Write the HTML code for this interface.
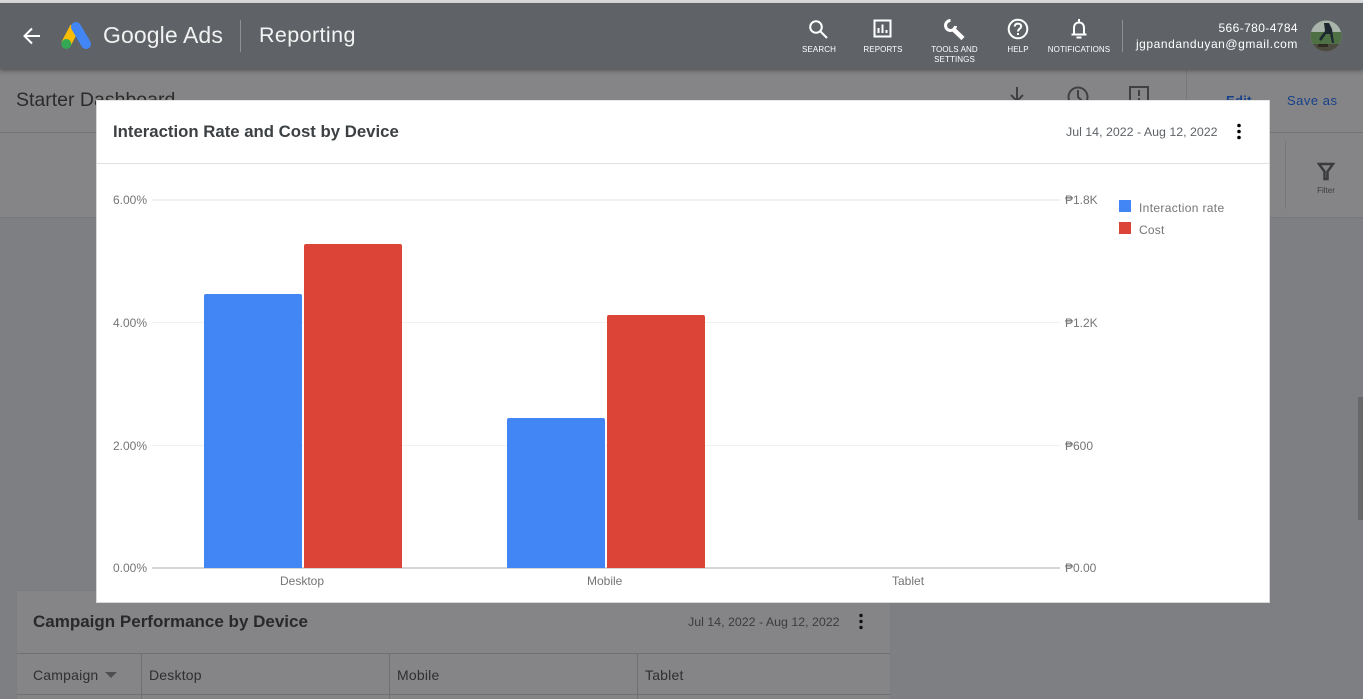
<!DOCTYPE html>
<html><head><meta charset="utf-8">
<style>
*{box-sizing:border-box}
html,body{margin:0;padding:0;width:1363px;height:699px;overflow:hidden;background:#7e7f82;font-family:"Liberation Sans",sans-serif}
.a{position:absolute;white-space:nowrap}
.nav{color:#fff;font-size:8px;letter-spacing:.1px;text-align:center;line-height:10px}
.ax{color:#757575;font-size:12px;line-height:14px}
.bar{position:absolute}
.line{position:absolute;left:152px;width:908px;height:1px;background:#f0f0f0}
</style></head><body>
<div class="a" style="left:0;top:0;width:1363px;height:3px;background:#dadada"></div>
<div class="a" style="left:0;top:70px;width:1363px;height:148px;background:#858587"></div>
<div class="a" style="left:0;top:132px;width:1363px;height:1px;background:#737476"></div>
<div class="a" style="left:0;top:217px;width:1363px;height:1px;background:#77787a"></div>
<div class="a" style="left:1186px;top:70px;width:1px;height:62px;background:#77787a"></div>
<div class="a" style="left:1285px;top:141px;width:1px;height:68px;background:#77787a"></div>
<div class="a" style="left:16px;top:88px;font-size:19.500px;line-height:24px;color:#2b2b2c">Starter Dashboard</div>
<svg class="a" style="left:1000px;top:80px" width="150" height="24" fill="none" stroke="#3f4042" stroke-width="2">
<path d="M17 7V20M11 15l6 6 6-6M9 25h16"/><circle cx="78" cy="17" r="9.500"/><path d="M78 10v7l5 5"/><rect x="130" y="7" width="18" height="18"/><path d="M139 10v6M139 18v2"/></svg>
<div class="a" style="left:1226px;top:93px;font-size:13px;line-height:16px;color:#17408a;font-weight:bold;letter-spacing:.3px">Edit</div>
<div class="a" style="left:1287px;top:93px;font-size:13px;line-height:16px;color:#17408a;letter-spacing:.5px">Save as</div>
<svg class="a" style="left:1316px;top:161px" width="20" height="20" fill="none" stroke="#3a3b3d" stroke-width="2.500"><path d="M3 3H17L11.500 10.500V18H8.500V10.500Z"/></svg>
<div class="a" style="left:1316px;top:186px;font-size:8px;line-height:10px;color:#3d3e40;width:20px;text-align:center">Filter</div>

<div class="a" style="left:16px;top:590px;width:875px;height:109px;background:#858587;border:1px solid #7c7d7f;border-bottom:0"></div>
<div class="a" style="left:17px;top:653px;width:873px;height:1px;background:#6f7072"></div>
<div class="a" style="left:17px;top:694px;width:873px;height:1px;background:#6f7072"></div>
<div class="a" style="left:141px;top:654px;width:1px;height:45px;background:#6f7072"></div>
<div class="a" style="left:389px;top:654px;width:1px;height:45px;background:#6f7072"></div>
<div class="a" style="left:637px;top:654px;width:1px;height:45px;background:#6f7072"></div>
<div class="a" style="left:33px;top:611px;font-size:17px;line-height:22px;font-weight:bold;color:#29292a">Campaign Performance by Device</div>
<div class="a" style="left:688px;top:615px;font-size:12.400px;line-height:15px;color:#3b3c3e">Jul 14, 2022 - Aug 12, 2022</div>
<svg class="a" style="left:856px;top:612px" width="10" height="20" fill="#111"><circle cx="5" cy="3.500" r="1.700"/><circle cx="5" cy="9.500" r="1.700"/><circle cx="5" cy="15.500" r="1.700"/></svg>
<div class="a" style="left:33px;top:667px;font-size:14px;line-height:17px;color:#2f2f31;letter-spacing:.2px">Campaign</div>
<div class="a" style="left:105px;top:672px;width:0;height:0;border-left:6px solid transparent;border-right:6px solid transparent;border-top:6px solid #4e4f51"></div>
<div class="a" style="left:149px;top:667px;font-size:14px;line-height:17px;color:#2f2f31;letter-spacing:.2px">Desktop</div>
<div class="a" style="left:397px;top:667px;font-size:14px;line-height:17px;color:#2f2f31;letter-spacing:.2px">Mobile</div>
<div class="a" style="left:645px;top:667px;font-size:14px;line-height:17px;color:#2f2f31;letter-spacing:.2px">Tablet</div>
<div class="a" style="left:1358px;top:397px;width:5px;height:123px;background:#67686a"></div>

<!-- header -->
<div class="a" style="left:0;top:3px;width:1363px;height:66px;background:#5f6368;box-shadow:0 2px 4px rgba(40,40,40,.45)"></div>
<svg class="a" style="left:22px;top:26px" width="20" height="20" fill="none" stroke="#fff" stroke-width="2"><path d="M18 10H3M10 2.500L2.500 10L10 17.500"/></svg>
<svg class="a" style="left:60px;top:21px" width="32" height="29">
<path d="M6 23L15 6" stroke="#fbbc04" stroke-width="10"/>
<path d="M16 6L26 23" stroke="#4285f4" stroke-width="10" stroke-linecap="round"/>
<circle cx="6.300" cy="23" r="5" fill="#34a853"/></svg>
<div class="a" style="left:103px;top:21px;font-size:23px;line-height:29px;color:#f1f1f1;letter-spacing:.1px">Google Ads</div>
<div class="a" style="left:240px;top:20px;width:1px;height:32px;background:#8d9094"></div>
<div class="a" style="left:259px;top:21px;font-size:21.500px;line-height:28px;color:#f4f4f4;letter-spacing:.4px">Reporting</div>

<svg class="a" style="left:808px;top:19px" width="22" height="20" fill="none" stroke="#fff" stroke-width="2"><circle cx="8" cy="8" r="5.800"/><path d="M12.500 12.500L19 19"/></svg>
<div class="a nav" style="left:799px;top:45px;width:40px">SEARCH</div>
<svg class="a" style="left:873px;top:19px" width="20" height="20" fill="none" stroke="#fff" stroke-width="2"><rect x="1.500" y="1.500" width="16" height="16"/><path d="M5.500 9v5M9.500 5.500V14M13.500 11v3"/></svg>
<div class="a nav" style="left:858px;top:45px;width:50px">REPORTS</div>
<svg class="a" style="left:943px;top:18px" width="24" height="24" fill="none" stroke="#fff"><path d="M9.500 10.500L20 20.500" stroke-width="4.500"/><path d="M7.500 2.500A5 5 0 1 0 12.500 8" stroke-width="3"/></svg>
<div class="a nav" style="left:922px;top:45px;width:65px">TOOLS AND<br>SETTINGS</div>
<svg class="a" style="left:1007px;top:18px" width="22" height="22" fill="none" stroke="#fff" stroke-width="2"><circle cx="11" cy="11" r="9.300"/><path d="M7.800 8.500C7.800 6.500 9.300 5.600 11 5.600C12.800 5.600 14.200 6.800 14.200 8.400C14.200 10.500 11 10.800 11 13.500M11 15v2"/></svg>
<div class="a nav" style="left:998px;top:45px;width:40px">HELP</div>
<svg class="a" style="left:1069px;top:18px" width="20" height="22" fill="none" stroke="#fff" stroke-width="2"><path d="M10 1v3M5 16V10C5 6.500 7 4.500 10 4.500C13 4.500 15 6.500 15 10V16M2.500 16.500H17.500M7.500 19.500H12.500"/></svg>
<div class="a nav" style="left:1044px;top:45px;width:70px">NOTIFICATIONS</div>
<div class="a" style="left:1122px;top:20px;width:1px;height:32px;background:#8d9094"></div>
<div class="a" style="right:65px;top:21px;font-size:12px;line-height:14px;color:#fff;letter-spacing:.4px">566-780-4784</div>
<div class="a" style="right:65px;top:37px;font-size:12px;line-height:14px;color:#fff;letter-spacing:.57px">jgpandanduyan@gmail.com</div>
<svg class="a" style="left:1310px;top:20px" width="32" height="32">
<defs><clipPath id="c"><circle cx="16" cy="16" r="15.500"/></clipPath></defs>
<g clip-path="url(#c)"><rect width="32" height="32" fill="#a9b5ab"/><rect y="12" width="32" height="12" fill="#4f7044"/><rect y="24" width="32" height="8" fill="#4d4a40"/><path d="M14 3h5l3 6 2 14h-2l-2-9h-4l-5 7-2-2 6-8z" fill="#1c2730"/><rect x="8" y="24" width="10" height="3" fill="#2e2a22"/></g></svg>

<!-- modal -->
<div class="a" style="left:96px;top:100px;width:1174px;height:503px;background:#fff;border:1px solid #d8d8d8;border-top-color:#e6e6e6"></div>
<div class="a" style="left:97px;top:163px;width:1172px;height:1px;background:#e0e0e0"></div>
<div class="a" style="left:113px;top:121px;font-size:16.750px;line-height:22px;font-weight:bold;color:#3c4043">Interaction Rate and Cost by Device</div>
<div class="a" style="left:1066px;top:125px;font-size:12.400px;line-height:15px;color:#5f6368">Jul 14, 2022 - Aug 12, 2022</div>
<svg class="a" style="left:1234px;top:122px" width="10" height="20" fill="#000"><circle cx="5" cy="3.500" r="1.800"/><circle cx="5" cy="9.500" r="1.800"/><circle cx="5" cy="15.500" r="1.800"/></svg>

<div class="line" style="top:199px;height:2px"></div>
<div class="line" style="top:322px"></div>
<div class="line" style="top:445px"></div>
<div class="line" style="top:567px;height:2px;background:#d6d6d6"></div>
<div class="a ax" style="left:113px;top:193px">6.00%</div>
<div class="a ax" style="left:113px;top:316px">4.00%</div>
<div class="a ax" style="left:113px;top:439px">2.00%</div>
<div class="a ax" style="left:113px;top:561px">0.00%</div>
<div class="a ax" style="left:1065px;top:193px">₱1.8K</div>
<div class="a ax" style="left:1065px;top:316px">₱1.2K</div>
<div class="a ax" style="left:1065px;top:439px">₱600</div>
<div class="a ax" style="left:1065px;top:561px">₱0.00</div>
<div class="bar" style="left:204px;top:294px;width:98px;height:274px;background:#4285f4;border-radius:2px 2px 0 0"></div>
<div class="bar" style="left:304px;top:244px;width:98px;height:324px;background:#db4437;border-radius:2px 2px 0 0"></div>
<div class="bar" style="left:507px;top:418px;width:98px;height:150px;background:#4285f4;border-radius:2px 2px 0 0"></div>
<div class="bar" style="left:607px;top:315px;width:98px;height:253px;background:#db4437;border-radius:2px 2px 0 0"></div>
<div class="a ax" style="left:280px;top:574px">Desktop</div>
<div class="a ax" style="left:587px;top:574px">Mobile</div>
<div class="a ax" style="left:892px;top:574px">Tablet</div>
<div class="a" style="left:1119px;top:200px;width:12px;height:12px;background:#4285f4"></div>
<div class="a" style="left:1119px;top:222px;width:12px;height:12px;background:#db4437"></div>
<div class="a ax" style="left:1139px;top:201px;letter-spacing:.34px">Interaction rate</div>
<div class="a ax" style="left:1139px;top:223px;letter-spacing:.2px">Cost</div>
</body></html>
